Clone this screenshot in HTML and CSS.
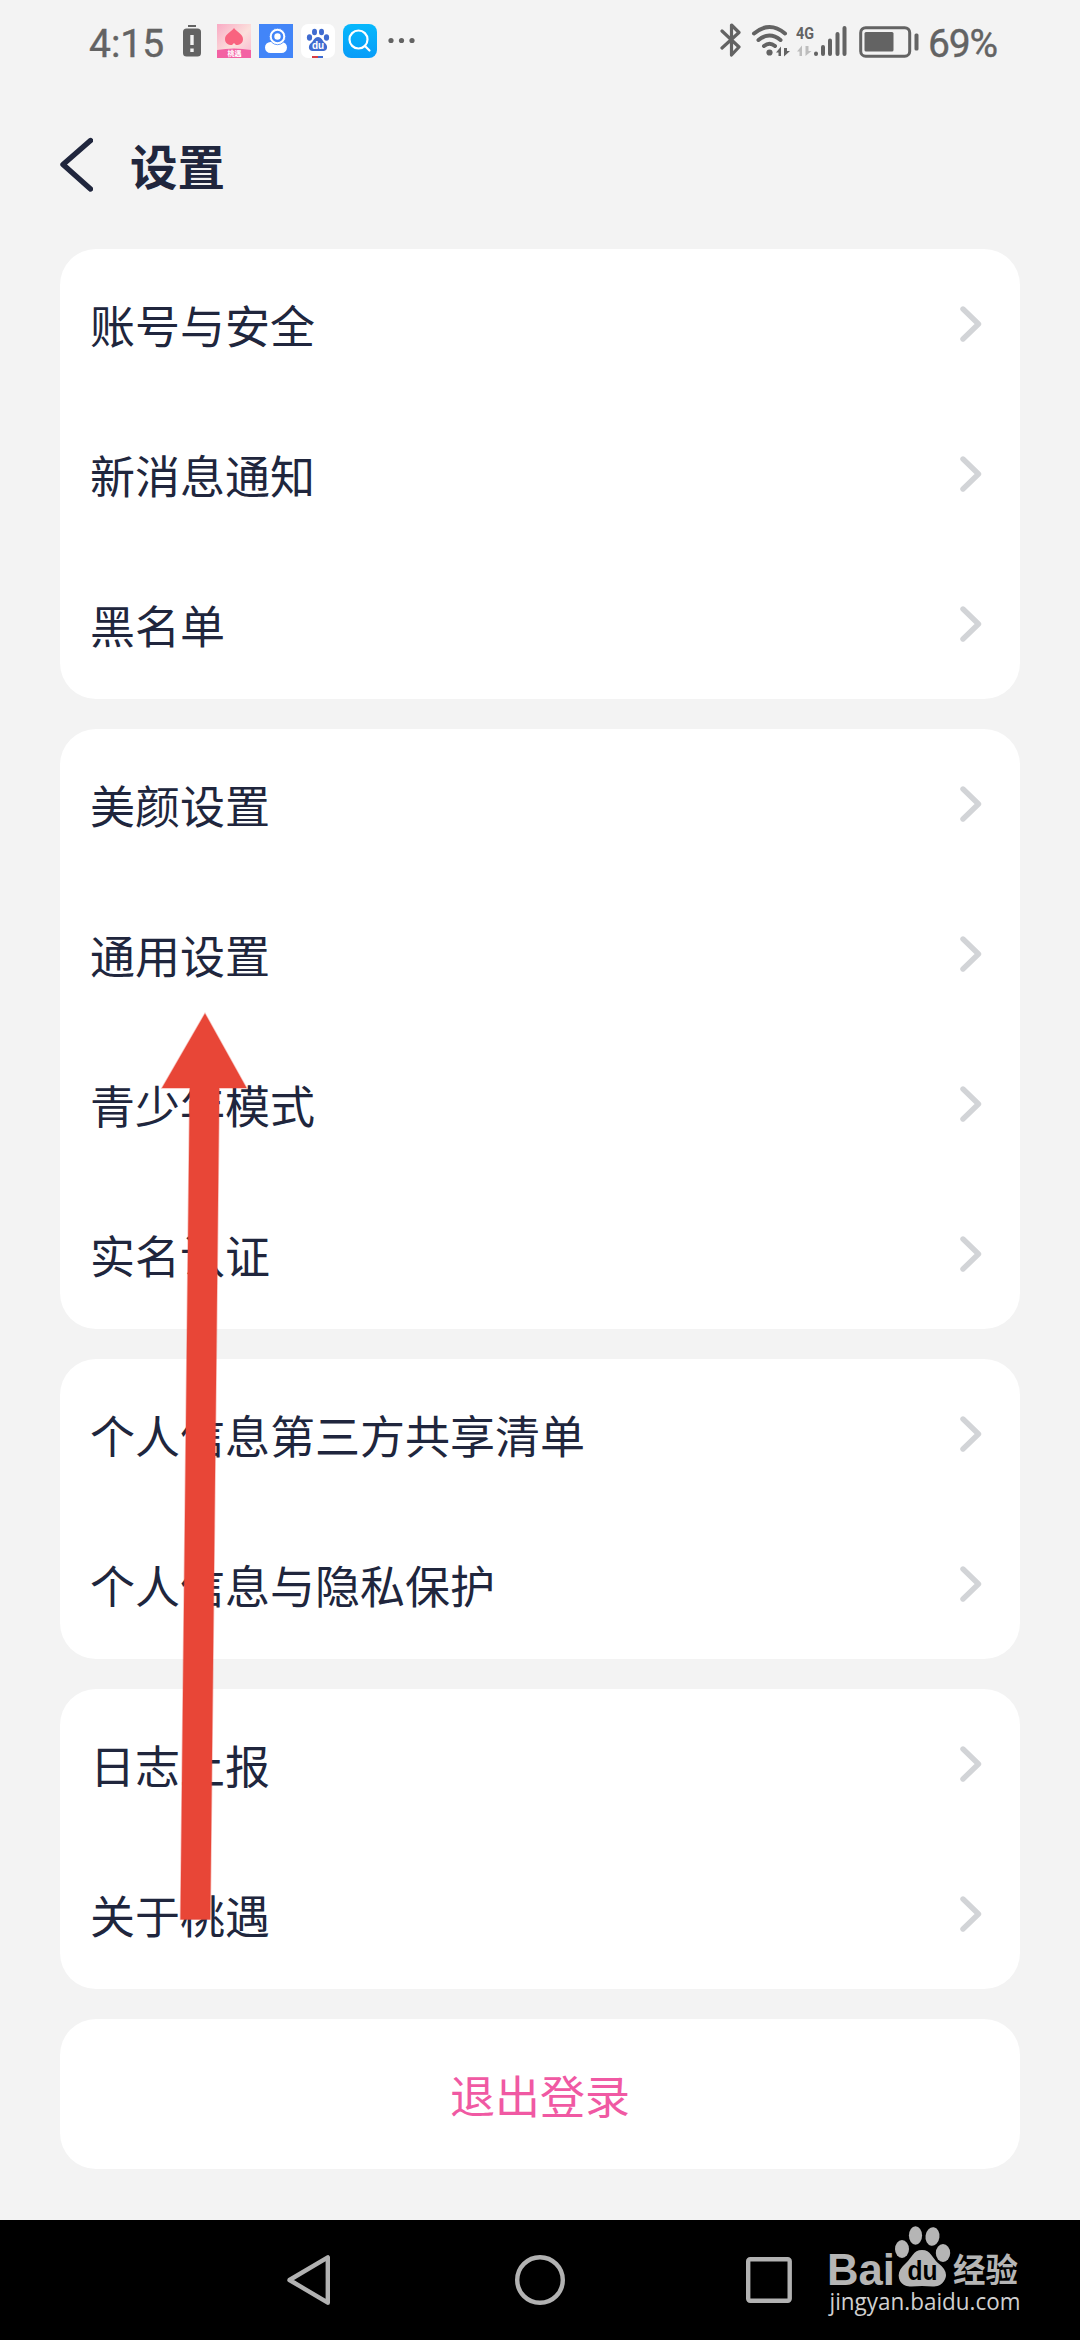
FILE: index.html
```html
<!DOCTYPE html>
<html lang="zh-CN">
<head>
<meta charset="utf-8">
<title>设置</title>
<link rel="stylesheet" href="styles.css">
</head>
<body>
<div class="screen">
  <div class="status">
    <div class="status-left">
      <span class="time">4:15</span>
      <svg class="low-battery" width="20" height="34" viewBox="0 0 20 34"><path d="M6 1h8v2H6z" fill="#636363"/><rect x="1" y="4.500" width="18" height="28" rx="3.500" fill="#636363"/><path d="M10 11v10M10 24.500v3.500" stroke="#f3f3f3" stroke-width="3.400"/></svg>
      <svg width="34" height="34" viewBox="0 0 34 34">
        <defs><linearGradient id="peach" x1="0" y1="0" x2="1" y2="1"><stop offset="0" stop-color="#f9aac4"/><stop offset=".55" stop-color="#fbe0dc"/><stop offset="1" stop-color="#f9b5cf"/></linearGradient></defs>
        <path fill="url(#peach)" d="M0 0h34v34H0z"/>
        <path fill="#f9637f" d="M17 4c3 4 9 6 9 11 0 4-3 6-7 6l-2-2-2 2c-4 0-7-2-7-6 0-5 6-7 9-11z"/>
        <path fill="#f361a3" d="M0 26q17-3 34 0v8H0z"/>
        <text class="app-name" x="17.500" y="32" text-anchor="middle">桃遇</text>
      </svg>
      <svg width="34" height="34" viewBox="0 0 34 34"><path fill="#4285f8" d="M0 0h34v34H0z"/><path fill="#fff" d="M11.500 18h11a5.500 5.500 0 0 1 0 11h-11a5.500 5.500 0 0 1 0-11z"/><circle cx="18.500" cy="12.500" r="8.200" fill="#fff" stroke="#4285f8" stroke-width=".8"/><circle cx="18.500" cy="12.500" r="4.500" fill="none" stroke="#4285f8" stroke-width="2.600"/></svg>
      <svg width="34" height="34" viewBox="0 0 34 34"><rect width="34" height="34" rx="7" fill="#fff"/><g fill="#3f6bd0"><ellipse cx="8.500" cy="13.500" rx="2.600" ry="3.200"/><ellipse cx="13.500" cy="8" rx="2.500" ry="3.300"/><ellipse cx="20.500" cy="8" rx="2.500" ry="3.300"/><ellipse cx="25.500" cy="13.500" rx="2.600" ry="3.200"/><path d="M17 13c4 0 4 4 7.500 6.500 3 3 1.500 7.500-2 7.500h-11c-3.500 0-5-4.500-2-7.500C13 17 13 13 17 13z"/></g><text class="du-small" x="17" y="25" text-anchor="middle">du</text><path fill="#d83b42" d="M11 32h6v2h-6z"/><path fill="#3f6bd0" d="M17 32h5v2h-5z"/></svg>
      <svg width="34" height="34" viewBox="0 0 34 34"><defs><linearGradient id="sky" x2="0" y2="1"><stop stop-color="#06b8fc"/><stop offset="1" stop-color="#089cf8"/></linearGradient></defs><rect width="34" height="34" rx="8" fill="url(#sky)"/><g fill="none" stroke="#fff" stroke-width="2.200" stroke-linecap="round"><circle cx="15.500" cy="15.500" r="9"/><path d="M22 22l4.500 4.500"/></g></svg>
      <svg class="more" width="28" height="34" viewBox="0 0 28 34" fill="#636363"><circle cx="3" cy="16.500" r="2.600"/><circle cx="13.500" cy="16.500" r="2.600"/><circle cx="24" cy="16.500" r="2.600"/></svg>
    </div>
    <div class="status-right">
      <svg width="22" height="36" viewBox="0 0 22 36" fill="none" stroke="#636363" stroke-width="3.200" stroke-linejoin="round" stroke-linecap="round"><path d="M2 9l17 16-7.500 8V3L19 10.500 2 26"/></svg>
      <svg class="wifi" width="40" height="36" viewBox="0 0 40 36"><g fill="none" stroke="#636363" stroke-width="4" stroke-linecap="round"><path d="M3 11.500q15.500-13 31 0M7.500 18q11-9 22 0M13 24q5.500-4.500 11 0"/></g><circle cx="18.500" cy="30.500" r="3.100" fill="#636363"/><path fill="#636363" d="M25 30.500l5-6V34h-2.500v-3.500zM33 26v8.500l6-5.500h-3v-3z"/></svg>
      <svg class="signal" width="52" height="36" viewBox="0 0 52 36"><text class="net" x="0" y="17" textLength="18" lengthAdjust="spacingAndGlyphs">4G</text><path fill="#bdbdbd" d="M1 29.500l5-6V34H3.500v-4.500zM9.500 24v10l6-5h-3v-5z"/><g stroke="#636363" stroke-width="4" stroke-linecap="round"><path d="M20 31.500v.500M27 25v7M34 18.500V32M41.500 12v20M48.500 6v26"/></g></svg>
      <svg class="battery" width="60" height="36" viewBox="0 0 60 36"><rect x="1.700" y="5.700" width="49" height="28.500" rx="5" fill="none" stroke="#636363" stroke-width="3"/><rect x="5.500" y="10" width="29" height="19.500" rx="1.500" fill="#636363"/><rect x="55.500" y="11.500" width="4" height="17" rx="1.500" fill="#636363"/></svg>
      <span class="percent">69%</span>
    </div>
  </div>

  <header class="header">
    <svg width="34" height="56" viewBox="0 0 34 56"><path d="M31.500 3.500L4 27.500l27.500 24.500" fill="none" stroke="#20263d" stroke-width="5.400" stroke-linecap="round" stroke-linejoin="round"/></svg>
    <h1 class="title">设置</h1>
  </header>

  <svg class="symbols" width="0" height="0"><symbol id="chevron" viewBox="0 0 22 36"><path d="M3 3l15.500 15L3 33" fill="none" stroke="#d2d4d7" stroke-width="5.400" stroke-linecap="round" stroke-linejoin="round"/></symbol></svg>

  <main class="groups">
    <section class="card">
      <div class="row"><span>账号与安全</span><svg class="chevron"><use href="#chevron"/></svg></div>
      <div class="row"><span>新消息通知</span><svg class="chevron"><use href="#chevron"/></svg></div>
      <div class="row"><span>黑名单</span><svg class="chevron"><use href="#chevron"/></svg></div>
    </section>
    <section class="card">
      <div class="row"><span>美颜设置</span><svg class="chevron"><use href="#chevron"/></svg></div>
      <div class="row"><span>通用设置</span><svg class="chevron"><use href="#chevron"/></svg></div>
      <div class="row"><span>青少年模式</span><svg class="chevron"><use href="#chevron"/></svg></div>
      <div class="row"><span>实名认证</span><svg class="chevron"><use href="#chevron"/></svg></div>
    </section>
    <section class="card">
      <div class="row"><span>个人信息第三方共享清单</span><svg class="chevron"><use href="#chevron"/></svg></div>
      <div class="row"><span>个人信息与隐私保护</span><svg class="chevron"><use href="#chevron"/></svg></div>
    </section>
    <section class="card">
      <div class="row"><span>日志上报</span><svg class="chevron"><use href="#chevron"/></svg></div>
      <div class="row"><span>关于桃遇</span><svg class="chevron"><use href="#chevron"/></svg></div>
    </section>
    <section class="card">
      <div class="row logout"><span>退出登录</span></div>
    </section>
  </main>

  <nav class="nav">
    <svg width="60" height="60" viewBox="0 0 60 60"><path d="M9.500 30L47.800 7.300v45.400z"/></svg>
    <svg width="60" height="60" viewBox="0 0 60 60"><circle cx="30" cy="30" r="22.800"/></svg>
    <svg width="60" height="60" viewBox="0 0 60 60"><rect x="8.200" y="9.200" width="41.500" height="41.500" rx="2"/></svg>
  </nav>

  <svg class="pointer" width="100" height="920" viewBox="0 0 100 920"><path d="M50 13.500L91.500 88H64.200L55.200 919.500H25.500L34.800 88H7z" fill="#e84637" stroke="#e84637" stroke-opacity=".35" stroke-width="1.500"/></svg>

  <svg class="watermark" width="210" height="96" viewBox="0 0 210 96">
    <g fill="#b5b5b5">
      <text class="bai" x="7" y="60" textLength="68" lengthAdjust="spacingAndGlyphs">Bai</text>
      <ellipse cx="82" cy="24" rx="7" ry="9"/><ellipse cx="95.500" cy="10.500" rx="6.600" ry="9.300"/><ellipse cx="112.500" cy="11.500" rx="7" ry="9.300" transform="rotate(8 112.500 11.500)"/><ellipse cx="123" cy="28" rx="7.200" ry="9"/>
      <path d="M102 25c9 0 10 8 16 13 8 6 10 12 6 18-5 8-14 5-22 5s-17 3-22-5c-3-6-1-12 6-18 6-5 7-13 16-13z"/>
      <text class="jy" x="133" y="57" textLength="65" lengthAdjust="spacingAndGlyphs">经验</text>
    </g>
    <text class="du" x="87.500" y="54.500" textLength="30" lengthAdjust="spacingAndGlyphs">du</text>
    <text class="url" x="9.500" y="85" textLength="191" lengthAdjust="spacingAndGlyphs">jingyan.baidu.com</text>
  </svg>
</div>
</body>
</html>
```
FILE: styles.css
```css
* { box-sizing: border-box; }
body {
  margin: 0;
  background: #f3f3f3;
  color: #20263d;
  font-family: "Noto Sans CJK SC", sans-serif;
}
svg { display: block; flex: none; }
.screen {
  position: relative;
  display: flex;
  flex-direction: column;
  width: 1080px;
  height: 2340px;
  overflow: hidden;
}

.status {
  display: flex;
  justify-content: space-between;
  height: 82px;
  padding: 0 83px 0 89px;
  color: #636363;
  font-family: Roboto, sans-serif;
}
.status-left, .status-right {
  display: flex;
  align-items: center;
  height: 82px;
}
.status-left { gap: 8px; }
.time, .percent {
  font-size: 39px;
  line-height: 46px;
  padding-top: 5px;
  -webkit-text-stroke: .4px #636363;
}
.time { width: 76px; }
.low-battery { margin: 0 7px 0 9px; }
.more { margin-left: 3px; }
.status-right { padding-bottom: 2px; }
.wifi { margin-left: 9px; }
.signal { margin-left: 5px; }
.battery { margin-left: 11px; }
.percent { margin-left: 9px; width: 69px; padding-top: 7px; white-space: nowrap; letter-spacing: -1.2px; }
.app-name { font: 700 7px "Noto Sans CJK SC", sans-serif; fill: #fff; }
.du-small { font: 700 10px "Liberation Sans", sans-serif; fill: #fff; }
.net { font: 700 17px Roboto, sans-serif; fill: #636363; }

.header {
  display: flex;
  align-items: center;
  gap: 37px;
  height: 167px;
  padding: 0 0 1px 59px;
}
.title {
  margin: 0;
  font-size: 47.5px;
  font-weight: 700;
  line-height: 60px;
}

.symbols { position: absolute; }
.groups {
  display: flex;
  flex-direction: column;
  gap: 30px;
  padding: 0 60px;
  flex: 1;
}
.card { border-radius: 36px; background: #fff; }
.row {
  display: flex;
  align-items: center;
  justify-content: space-between;
  height: 150px;
  padding: 0 38px 0 30px;
  font-size: 45px;
  line-height: 66px;
}
.row span { padding-top: 2px; }
.chevron { width: 22px; height: 36px; }
.logout { justify-content: center; padding: 0; color: #f059a3; }

.nav {
  display: grid;
  grid-template-columns: repeat(3, 230px);
  place-content: center;
  justify-items: center;
  height: 120px;
  background: #000;
  fill: none;
  stroke: #b2b2b2;
  stroke-width: 4.4px;
  stroke-linejoin: round;
}

.pointer { position: absolute; left: 155px; top: 1000px; }
.watermark { position: absolute; left: 820px; top: 2225px; overflow: visible; }
.bai { font: 700 44px "Liberation Sans", sans-serif; }
.du { font: 700 27px "Liberation Sans", sans-serif; fill: #000; }
.jy { font: 700 33px "Noto Sans CJK SC", sans-serif; }
.url { font: 400 23px "Open Sans", sans-serif; fill: #d0d0d0; }
```
